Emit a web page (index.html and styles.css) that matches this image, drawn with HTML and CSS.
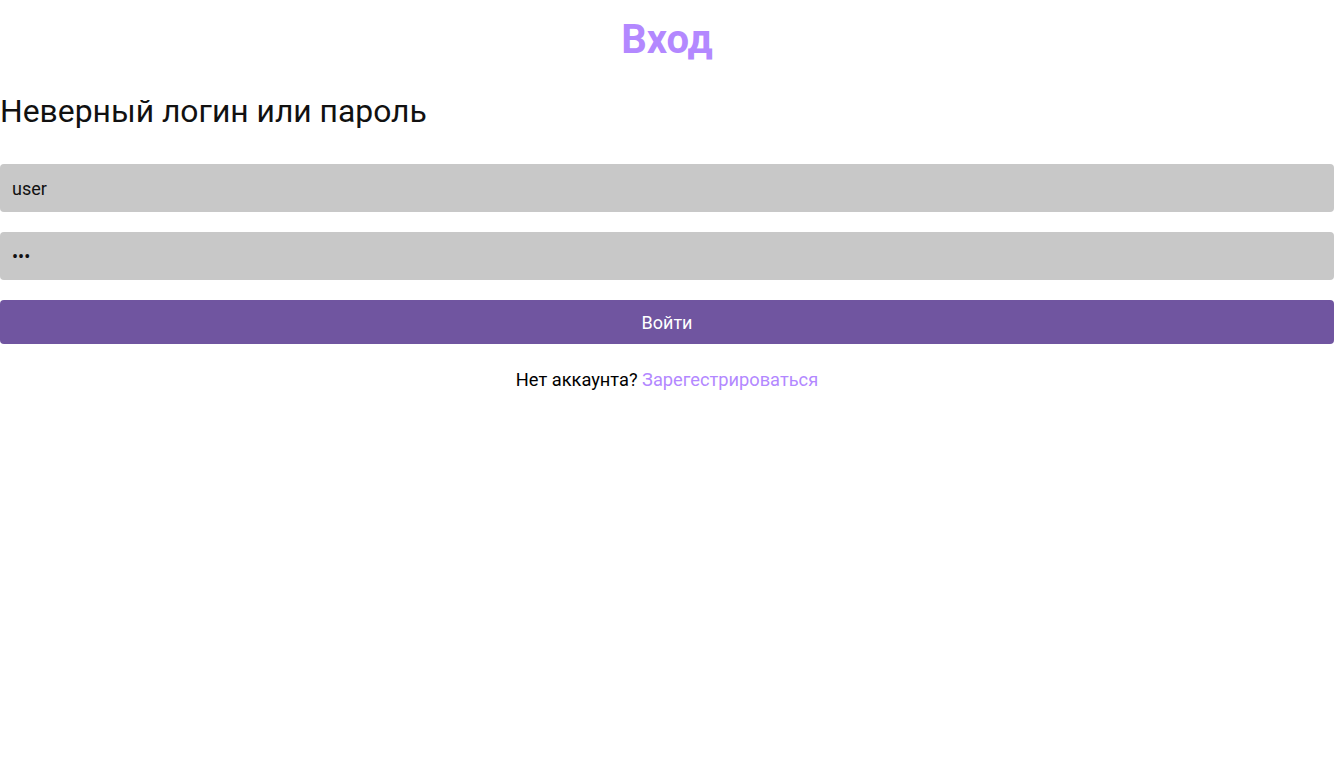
FILE: index.html
```html
<!DOCTYPE html>
<html lang="ru">
<head>
<meta charset="utf-8">
<title>Вход</title>
<link rel="stylesheet" href="styles.css">
</head>
<body>
<main class="page">
  <h1 class="title">Вход</h1>
  <h2 class="error">Неверный логин или пароль</h2>
  <form class="form">
    <input class="field" type="text" value="user">
    <input class="field" type="password" value="123">
    <button class="submit" type="button">Войти</button>
  </form>
  <p class="footer">Нет аккаунта? <a class="link" href="#">Зарегестрироваться</a></p>
</main>
</body>
</html>
```

FILE: styles.css
```css
html, body {
  margin: 0;
  padding: 0;
  background: #ffffff;
}
body {
  font-family: Roboto, "Liberation Sans", sans-serif;
  color: #000;
}
.page {
  display: flex;
  flex-direction: column;
}
.title {
  margin: 16px 0 0;
  font-size: 40px;
  font-weight: 700;
  line-height: 47px;
  text-align: center;
  color: #b388ff;
}
.error {
  margin: 30px 0 0;
  font-size: 31.85px;
  font-weight: 400;
  line-height: 37px;
  color: #111;
}
.form {
  margin-top: 34px;
  display: flex;
  flex-direction: column;
  gap: 20px;
}
.field {
  box-sizing: border-box;
  height: 48px;
  width: 100%;
  margin: 0;
  border: none;
  border-radius: 4px;
  background: #c8c8c8;
  padding: 0 12px;
  font-family: Roboto, "Liberation Sans", sans-serif;
  font-size: 18px;
  color: #111;
  outline: none;
}
.submit {
  height: 44px;
  width: 100%;
  margin: 0;
  border: none;
  border-radius: 4px;
  background: #7055a0;
  color: #fff;
  font-family: Roboto, "Liberation Sans", sans-serif;
  font-size: 18px;
  cursor: pointer;
}
.footer {
  margin: 25px 0 0;
  text-align: center;
  font-size: 18.25px;
  line-height: 21px;
  color: #000;
}
.link {
  color: #b388ff;
  text-decoration: none;
}
```
